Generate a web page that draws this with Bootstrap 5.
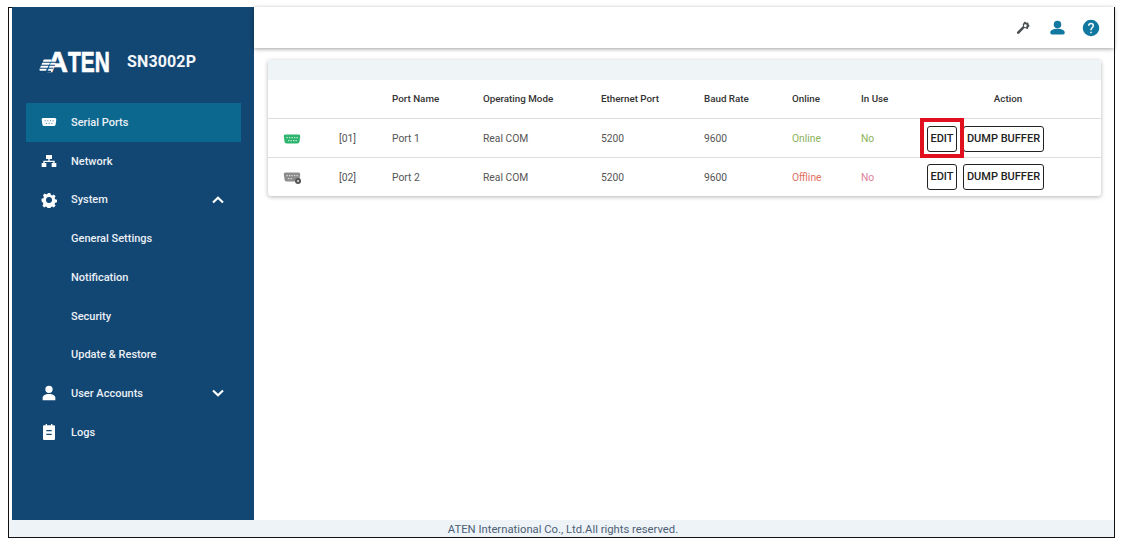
<!DOCTYPE html>
<html lang="en">
<head>
<meta charset="utf-8">
<title>SN3002P</title>
<link href="https://cdn.jsdelivr.net/npm/bootstrap@5.3.0/dist/css/bootstrap.min.css" rel="stylesheet">
<style>
html,body{height:548px;overflow:hidden;background:#fff;font-family:Roboto,"Liberation Sans",sans-serif}
.frame-box{margin:7px 6px 0 8px;height:531px;border-left:1px solid #111;border-right:1px solid #111;border-bottom:1px solid #111;position:relative}
.frame-stub{position:absolute;left:0;top:0;width:3px;height:1px;background:#111}
.work-area{height:513px;padding-left:3px}
.side-panel{width:242px;background:#124673;flex:none;color:#f1f5f8}
.brand-row{height:96px;padding:44px 0 0 27px}
.brand-mark{width:72px;height:22px;flex:none;position:relative}
.brand-word{position:absolute;left:8px;top:-4.2px;display:flex;font:700 29px/30px "Liberation Sans",sans-serif;color:#fff;-webkit-text-stroke:.7px #fff}
.brand-tail{display:inline-block;transform:scaleX(.72);transform-origin:left center}
.brand-wing{position:absolute;left:0;top:0;z-index:1}
.brand-model{margin-left:16px;font:700 16px/22px Roboto,sans-serif;letter-spacing:.13px;color:#f3f6f9}
.side-nav{margin-left:14px;width:215px}
.side-link{height:38.75px;padding:2px 0 0 45px;color:#eaf0f5;font-size:11px;font-weight:500;position:relative;display:flex;align-items:center}
.side-link:hover{color:#fff}
.side-link.is-on{background:#0d6890;height:38.5px}
.side-ico{position:absolute;left:14.500px;top:50%;transform:translateY(-50%);width:16px;height:16px;fill:#fff}
.side-chev{position:absolute;right:17px;top:50%;transform:translateY(-50%);width:12px;height:8px;fill:none;stroke:#fff;stroke-width:2.2}
.main-pane{min-width:0;position:relative}
.top-strip{height:41px;background:#fff;box-shadow:0 1px 4px rgba(0,0,0,.38);padding:0 14px 0 0}
.top-ico{fill:#12789f;flex:none}
.ico-wrench{width:14px;height:14px;margin-right:20px;fill:#4a4f52}
.ico-user{width:15px;height:15px;margin-right:17px}
.ico-help{width:18px;height:18px}
.content-pad{padding:12px 13px 0 14px}
.ports-card{border:0;border-radius:3px;box-shadow:0 1px 4px rgba(0,0,0,.3);overflow:hidden}
.card-strip{height:20px;background:#eff4f7}
.ports-table{table-layout:fixed;width:833px;margin:0}
.ports-table th,.ports-table td{padding:1px 0 0 16px;vertical-align:middle;border-bottom:1px solid #dedede;box-shadow:none}
.ports-table tr:last-child td{border-bottom:0}
.ports-table th{height:38px;font-size:9.800px;font-weight:500;color:#333;padding-top:2px}
.ports-table td{height:39px;font-size:10.300px;font-weight:400;color:#555}
.ports-table tbody tr:first-child td{padding-top:2px}
.ports-table .act-head{padding:2px 16px 0 20px;text-align:center}
.ports-table tbody .act-cell{white-space:nowrap;padding:0 0 0 16px}
.port-ico{width:18px;height:14px;display:block;margin-left:-1px}
.ports-table .ok-text{color:#8cb35a}
.ports-table .bad-text{color:#e0809a}
.ports-table .off-text{color:#e0705f}
.mini-btn{font-size:11px;font-weight:500;line-height:14px;height:26px;border:1px solid #222;border-radius:3px;color:#222;background:#fff;padding:1px 0 0}
.mini-btn+.mini-btn{margin-left:6px}
.mini-edit{width:30px}
.mini-dump{width:81px}
.mark-box{position:absolute;left:666px;top:111px;width:44px;height:40px;border:4px solid #e0101f;pointer-events:none}
.page-foot{height:17px;background:#eef3f8;text-align:center;font-size:11.270px;line-height:19px;color:#4c5f75;white-space:nowrap;overflow:hidden;padding-left:3px}
</style>
</head>
<body>
<svg width="0" height="0" class="d-none" aria-hidden="true"><defs>
<symbol id="i-serial" viewBox="0 0 18 14"><path d="M2.500 2.500h13c1.200 0 1.900.9 1.700 2l-.7 5C16.300 10.700 15.500 11.500 14.400 11.500H3.600C2.500 11.500 1.700 10.700 1.500 9.500L.8 4.500C.6 3.400 1.300 2.500 2.500 2.500z"/></symbol>
</defs></svg>
<div class="frame-box">
 <div class="frame-stub"></div>
 <div class="work-area d-flex">
  <aside class="side-panel">
   <div class="brand-row d-flex align-items-start">
    <div class="brand-mark">
     <span class="brand-word"><span>A</span><span class="brand-tail">TEN</span></span>
     <svg class="brand-wing" width="22" height="22" viewBox="0 0 22 22" aria-hidden="true"><g fill="#124673"><path d="M4 10.800h14v1H3.400zM3 13.800h13v1H2.500zM2 16.800h12v1H1.600zM1 19.800h11v1.500H1z"/></g><g fill="#fff"><path d="M4.800 8.500h8l-1 2.300H3.800z"/><path d="M3.200 11.800h8l-1 2H2.500z"/><path d="M1.800 14.800h7.700l-.8 2H1.200z"/><path d="M.3 17.800h7.500l-.7 2H.8z"/></g></svg>
    </div>
    <span class="brand-model">SN3002P</span>
   </div>
   <nav class="nav flex-column side-nav">
    <a class="nav-link side-link is-on" href="#"><svg class="side-ico" viewBox="0 0 18 14"><use href="#i-serial"/><g fill="#5d9ab5"><rect x="4" y="5" width="1.300" height="1.200"/><rect x="7" y="5" width="1.300" height="1.200"/><rect x="10" y="5" width="1.300" height="1.200"/><rect x="13" y="5" width="1.300" height="1.200"/><rect x="5.500" y="8" width="1.300" height="1.200"/><rect x="8.500" y="8" width="1.300" height="1.200"/><rect x="11.500" y="8" width="1.300" height="1.200"/></g></svg>Serial Ports</a>
    <a class="nav-link side-link" href="#"><svg class="side-ico" viewBox="0 0 24 24"><path d="M7.500 3h9v6h-3.500v2.500H20.500V15H23v6h-7v-6h2.500v-1.500h-13V15H8v6H1v-6h2.500v-3.500H11V9H7.500z"/></svg>Network</a>
    <a class="nav-link side-link" href="#"><svg class="side-ico" viewBox="0 0 24 24"><path fill-rule="evenodd" d="M10 1.500h4l.7 2.800 1.900.8 2.500-1.500 2.800 2.800-1.500 2.500.8 1.900 2.800.7v4l-2.800.7-.8 1.900 1.500 2.500-2.800 2.800-2.500-1.500-1.900.8-.7 2.800h-4l-.7-2.800-1.900-.8-2.500 1.500-2.800-2.800 1.500-2.500-.8-1.900L.8 14V10l2.800-.7.8-1.900-1.500-2.500 2.800-2.800 2.500 1.500 1.900-.8zM12 7.500a4.500 4.500 0 1 0 0 9 4.500 4.500 0 0 0 0-9z"/></svg>System<svg class="side-chev" viewBox="0 0 12 8"><path d="M1 6.500 6 1.800l5 4.700"/></svg></a>
    <a class="nav-link side-link" href="#">General Settings</a>
    <a class="nav-link side-link" href="#">Notification</a>
    <a class="nav-link side-link" href="#">Security</a>
    <a class="nav-link side-link" href="#">Update &amp; Restore</a>
    <a class="nav-link side-link" href="#"><svg class="side-ico" viewBox="0 0 24 24"><path d="M12 1a5.500 5.500 0 1 1 0 11 5.500 5.500 0 0 1 0-11zM12 13.500c5 0 9.500 2.300 9.500 5.300V23H2.500v-4.200c0-3 4.500-5.300 9.500-5.300z"/></svg>User Accounts<svg class="side-chev" viewBox="0 0 12 8"><path d="M1 1.500 6 6.200l5-4.700"/></svg></a>
    <a class="nav-link side-link" href="#"><svg class="side-ico" viewBox="0 0 24 24"><path fill-rule="evenodd" d="M7 0h2v2h6V0h2v2h2c1.200 0 2 .8 2 2v18c0 1.200-.8 2-2 2H5c-1.200 0-2-.8-2-2V4c0-1.200.8-2 2-2h2zm1 9v2h8V9zm0 5.500v2h8v-2z"/></svg>Logs</a>
   </nav>
  </aside>
  <main class="main-pane flex-grow-1">
   <div class="top-strip d-flex align-items-center justify-content-end">
    <svg class="top-ico ico-wrench" viewBox="0 0 24 24"><path fill-rule="evenodd" d="M15 1l3 2 3-.5.500 3 2 3-2.500 2-.5 3-3.500-.5-2-1.500L5.500 21.500c-1 1-2.500 1-3.300 0-1-1-1-2.200 0-3.200L12 8.500l-.5-2.500 1.500-2.500zM16 5.500a2.500 2.500 0 1 0 0 5 2.500 2.500 0 0 0 0-5z"/></svg>
    <svg class="top-ico ico-user" viewBox="0 0 24 24"><path d="M12 1a6 6 0 1 1 0 12 6 6 0 0 1 0-12zM12 14c6 0 11.500 2.300 11.500 5.500v1c0 1.500-1 2.500-2.500 2.500H3c-1.500 0-2.500-1-2.500-2.500v-1C.5 16.300 6 14 12 14z"/></svg>
    <svg class="top-ico ico-help" viewBox="0 0 24 24"><path d="M15.070 11.250 14.170 12.170C13.450 12.890 13 13.500 13 15H11V14.500C11 13.390 11.450 12.390 12.170 11.670L13.410 10.410C13.780 10.050 14 9.550 14 9 14 7.890 13.100 7 12 7A2 2 0 0 0 10 9H8A4 4 0 0 1 16 9C16 9.880 15.640 10.670 15.070 11.250M13 19H11V17H13M12 1A11 11 0 1 0 12 23 11 11 0 0 0 12 1Z"/></svg>
   </div>
   <div class="content-pad">
    <div class="card ports-card">
     <div class="card-strip"></div>
     <table class="table ports-table">
      <colgroup><col style="width:55px"><col style="width:53px"><col style="width:91px"><col style="width:118px"><col style="width:103px"><col style="width:88px"><col style="width:69px"><col style="width:66px"><col style="width:190px"></colgroup>
      <thead><tr><th></th><th></th><th>Port Name</th><th>Operating Mode</th><th>Ethernet Port</th><th>Baud Rate</th><th>Online</th><th>In Use</th><th class="act-head">Action</th></tr></thead>
      <tbody>
       <tr>
        <td><svg class="port-ico" viewBox="0 0 18 14" fill="#2db56f"><use href="#i-serial"/><g fill="#cdeedb"><rect x="3.500" y="5" width="1.300" height="1.200"/><rect x="6" y="5" width="1.300" height="1.200"/><rect x="8.500" y="5" width="1.300" height="1.200"/><rect x="11" y="5" width="1.300" height="1.200"/><rect x="13.500" y="5" width="1.300" height="1.200"/><rect x="5" y="8" width="1.300" height="1.200"/><rect x="7.500" y="8" width="1.300" height="1.200"/><rect x="10" y="8" width="1.300" height="1.200"/><rect x="12.500" y="8" width="1.300" height="1.200"/></g></svg></td>
        <td>[01]</td><td>Port 1</td><td>Real COM</td><td>5200</td><td>9600</td><td class="ok-text">Online</td><td class="ok-text">No</td>
        <td class="act-cell"><button type="button" class="btn mini-btn mini-edit">EDIT</button><button type="button" class="btn mini-btn mini-dump">DUMP BUFFER</button></td>
       </tr>
       <tr>
        <td><svg class="port-ico" viewBox="0 0 18 14" fill="#8d8d8d"><use href="#i-serial"/><g fill="#ddd"><rect x="3.500" y="5" width="1.300" height="1.200"/><rect x="6" y="5" width="1.300" height="1.200"/><rect x="8.500" y="5" width="1.300" height="1.200"/><rect x="11" y="5" width="1.300" height="1.200"/><rect x="13.500" y="5" width="1.300" height="1.200"/><rect x="5" y="8" width="1.300" height="1.200"/><rect x="7.500" y="8" width="1.300" height="1.200"/></g><circle cx="15" cy="11" r="3" fill="#555"/><circle cx="15" cy="11" r="1.100" fill="#ddd"/></svg></td>
        <td>[02]</td><td>Port 2</td><td>Real COM</td><td>5200</td><td>9600</td><td class="off-text">Offline</td><td class="bad-text">No</td>
        <td class="act-cell"><button type="button" class="btn mini-btn mini-edit">EDIT</button><button type="button" class="btn mini-btn mini-dump">DUMP BUFFER</button></td>
       </tr>
      </tbody>
     </table>
    </div>
   </div>
   <div class="mark-box"></div>
  </main>
 </div>
 <footer class="page-foot">ATEN International Co., Ltd.All rights reserved.</footer>
</div>
<script src="https://cdn.jsdelivr.net/npm/bootstrap@5.3.0/dist/js/bootstrap.bundle.min.js"></script>
</body>
</html>
